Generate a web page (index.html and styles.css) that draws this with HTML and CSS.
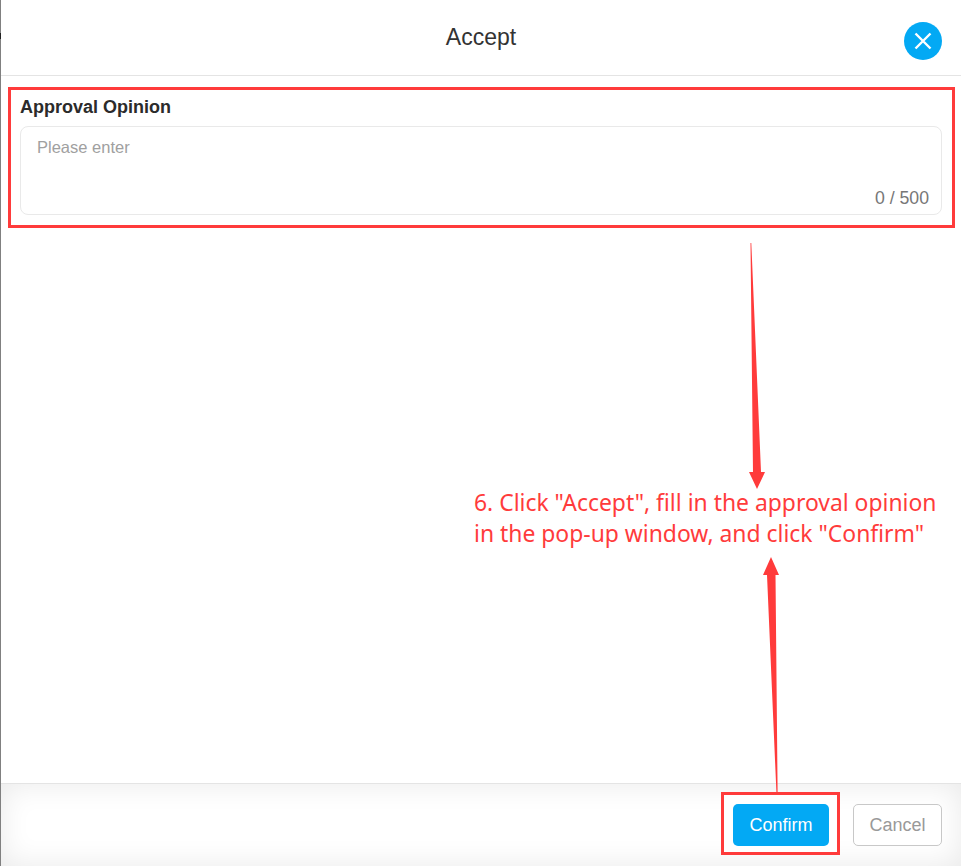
FILE: index.html
```html
<!DOCTYPE html>
<html lang="en">
<head>
  <meta charset="UTF-8">
  <title>Accept</title>
  <link rel="stylesheet" href="styles.css">
</head>
<body>

  <div class="dialog">
    <div class="dialog-header">
      <span></span>
      <h1 class="dialog-title">Accept</h1>
      <button class="close-btn" aria-label="Close">
        <svg width="38" height="38" viewBox="0 0 38 38">
          <path d="M11.5 11.5 L26.5 26.5 M26.5 11.5 L11.5 26.5" stroke="#fff" stroke-width="2.4" fill="none"/>
        </svg>
      </button>
    </div>

    <div class="dialog-body">
      <div class="highlight-box">
        <div class="field-label">Approval Opinion</div>
        <div class="field-input">
          <span class="placeholder">Please enter</span>
          <span class="counter">0 / 500</span>
        </div>
      </div>
    </div>

    <div class="dialog-footer">
      <div class="highlight-btn">
        <button class="btn btn-primary">Confirm</button>
      </div>
      <button class="btn btn-cancel">Cancel</button>
    </div>
  </div>

  <!-- annotation drawn over the screenshot -->
  <svg class="arrows" width="961" height="866" viewBox="0 0 961 866">
    <polygon points="750.5,243 751.3,243 761,472 765,472 757,489 749,472 753,472"/>
    <polygon points="771,557 779,575 775.5,575 777.6,792 776.4,792 767,575 763,575"/>
  </svg>
  <p class="annotation">6. Click "Accept", fill in the approval opinion<br>in the pop-up window, and click "Confirm"</p>

</body>
</html>
```

FILE: styles.css
```css
* {
  box-sizing: border-box;
}

body {
  margin: 0;
  font-family: "Liberation Sans", Arial, sans-serif;
  background: #fff;
  color: #333;
}

.dialog {
  position: relative;
  display: flex;
  flex-direction: column;
  height: 866px;
  border-left: 1px solid #808080;
}

/* dark tick on the window edge */
.dialog::before {
  content: "";
  position: absolute;
  top: 33px;
  left: -1px;
  width: 1px;
  height: 6px;
  background: #222;
}

.dialog-header {
  display: grid;
  grid-template-columns: 1fr auto 1fr;
  height: 76px;
  border-bottom: 1px solid #e4e4e4;
}

.dialog-title {
  margin: 20px 0 0;
  font-size: 23px;
  font-weight: normal;
  line-height: 34px;
  color: #333;
}

.close-btn {
  justify-self: end;
  width: 38px;
  height: 38px;
  margin: 22px 19px 0 0;
  padding: 0;
  border: none;
  border-radius: 50%;
  background: #03a9f4;
}

.close-btn svg {
  display: block;
}

.dialog-body {
  flex: 1;
  padding: 11px 6px 0 7px;
}

.highlight-box {
  height: 141px;
  padding: 7px 10px 0 9px;
  border: 3px solid #ff3b3b;
}

.field-label {
  margin-bottom: 8px;
  font-size: 18px;
  font-weight: bold;
  line-height: 21px;
  color: #2b2b2b;
}

.field-input {
  display: flex;
  flex-direction: column;
  justify-content: space-between;
  height: 89px;
  padding: 10px 12px 5px 16px;
  border: 1px solid #e9e9e9;
  border-radius: 8px;
}

.placeholder {
  font-size: 16.5px;
  line-height: 21px;
  color: #a0a0a0;
}

.counter {
  align-self: flex-end;
  font-size: 17.7px;
  line-height: 22px;
  color: #777;
}

.dialog-footer {
  display: flex;
  justify-content: flex-end;
  align-items: flex-start;
  height: 83px;
  padding: 8px 19px 0 0;
  border-top: 1px solid #e4e4e4;
  box-shadow: inset 0 0 30px rgba(0, 0, 0, 0.09);
}

.highlight-btn {
  padding: 9px 8px 6px 9px;
  border: 3px solid #ff3b3b;
  background: #fff;
}

.btn {
  display: block;
  height: 42px;
  padding: 0;
  border-radius: 5px;
  font-family: inherit;
  font-size: 18px;
}

.btn-primary {
  width: 96px;
  border: none;
  background: #03a9f4;
  color: #fff;
}

.btn-cancel {
  width: 89px;
  margin: 12px 0 0 13px;
  border: 1px solid #c8c8c8;
  background: #fff;
  color: #999;
}

.arrows {
  position: absolute;
  top: 0;
  left: 0;
  fill: #ff3b3b;
}

.annotation {
  position: absolute;
  top: 487px;
  left: 474px;
  margin: 0;
  font-family: "Noto Sans", sans-serif;
  font-size: 22.9px;
  line-height: 31px;
  white-space: nowrap;
  color: #ff3b3b;
}
```
